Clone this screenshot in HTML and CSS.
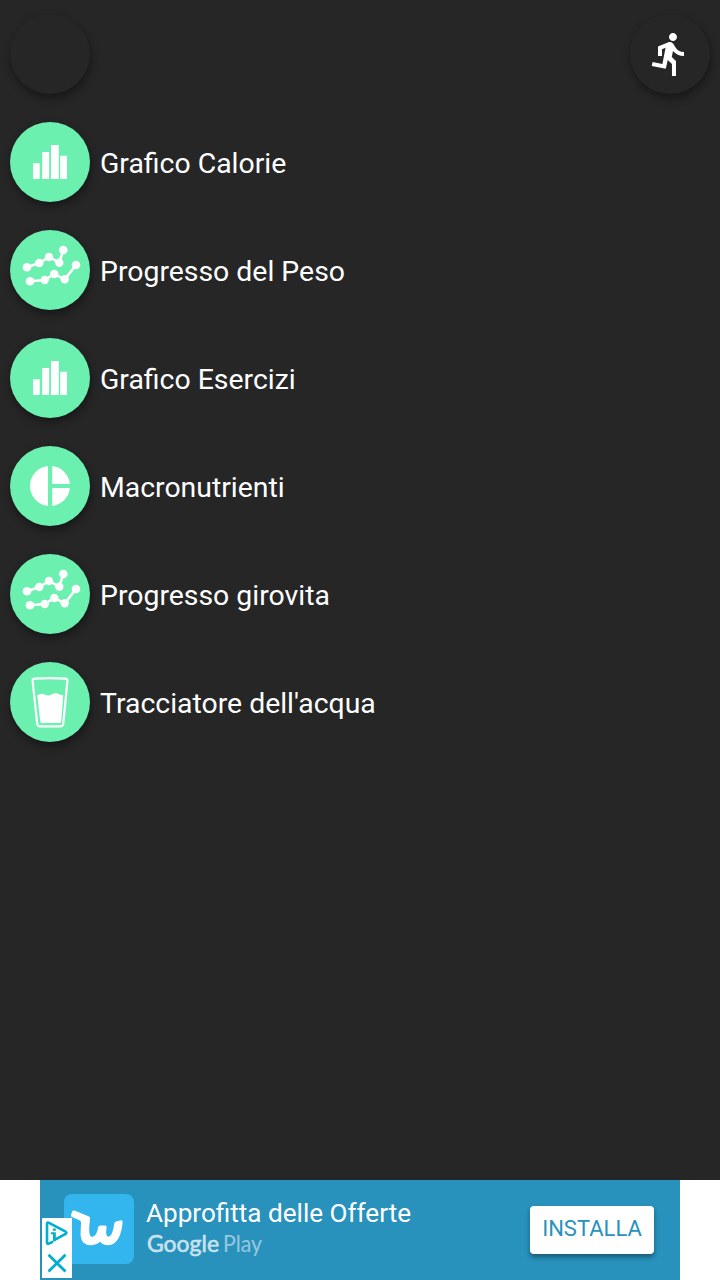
FILE: index.html
```html
<!DOCTYPE html>
<html lang="it">
<head>
<meta charset="utf-8">
<title>Grafici</title>
<link rel="stylesheet" href="styles.css">
</head>
<body>
<svg width="0" height="0" class="defs">
  <symbol id="bars" viewBox="0 0 80 80"><path d="M23 41.3h6.7V57H23zM32.2 30h7v27h-7zM41 23h7.8v34H41zM50.3 33.7H57V57h-6.7z"/></symbol>
  <symbol id="lines" viewBox="0 0 80 80">
    <path d="M17 37.3 29.3 33 39 27l10.3 5.7L53.3 20M20 51.3 34.7 50l9.6-6 10.4 5.3L66 35" fill="none" stroke="#fff" stroke-width="2.5"/>
    <circle cx="17" cy="37.3" r="4.3"/><circle cx="29.3" cy="33" r="4.2"/><circle cx="39" cy="27" r="4.2"/><circle cx="49.3" cy="32.7" r="4.2"/><circle cx="53.3" cy="20" r="4.3"/>
    <circle cx="20" cy="51.3" r="4.3"/><circle cx="34.7" cy="50" r="4.2"/><circle cx="44.3" cy="44" r="4.2"/><circle cx="54.7" cy="49.3" r="4.2"/><circle cx="66" cy="35" r="4.3"/>
  </symbol>
  <symbol id="pie" viewBox="0 0 80 80"><path d="M38 20.1a20 20 0 0 0 0 39.8zM42.2 20.1V38h17.7A20 20 0 0 0 42.2 20.1zM42.2 42v17.9A20 20 0 0 0 59.9 42z"/></symbol>
  <symbol id="glass" viewBox="0 0 80 80">
    <path d="M24.8 16.6Q40 15.6 55.2 16.6Q57.6 16.8 57.4 19L53.3 61.5Q53 64.4 50.5 64.4H30Q27.5 64.4 27.2 61.5L22.6 19Q22.4 16.8 24.8 16.6z" fill="none" stroke="#fff" stroke-width="2.2"/>
    <path d="M27.3 33.2Q30 31.3 33 31.8Q37 34.6 40.5 33Q45 29.8 49 32.3Q51 33.3 53.2 32.8L51.3 59Q51.2 61 49.5 61H32Q30.4 61 30.2 59z"/>
  </symbol>
</svg>
<main class="screen">
  <header class="topbar">
    <div class="fab dark"></div>
    <div class="fab dark"><svg class="run" viewBox="0 0 24 24"><path d="M13.49 5.48c1.1 0 2-.9 2-2s-.9-2-2-2-2 .9-2 2 .9 2 2 2zm-3.6 13.9l1-4.4 2.1 2v6h2v-7.5l-2.1-2 .6-3c1.3 1.5 3.3 2.5 5.5 2.5v-2c-1.9 0-3.5-1-4.3-2.4l-1-1.6c-.4-.6-1-1-1.7-1-.3 0-.5.1-.8.1l-5.2 2.2v4.7h2v-3.4l1.8-.7-1.6 8.1-4.9-1-.4 2 7 1.4z"/></svg></div>
  </header>
  <nav class="menu">
    <div class="item"><div class="fab"><svg><use href="#bars"/></svg></div><span class="label">Grafico Calorie</span></div>
    <div class="item"><div class="fab"><svg><use href="#lines"/></svg></div><span class="label">Progresso del Peso</span></div>
    <div class="item"><div class="fab"><svg><use href="#bars"/></svg></div><span class="label">Grafico Esercizi</span></div>
    <div class="item"><div class="fab"><svg><use href="#pie"/></svg></div><span class="label">Macronutrienti</span></div>
    <div class="item"><div class="fab"><svg><use href="#lines"/></svg></div><span class="label">Progresso girovita</span></div>
    <div class="item"><div class="fab"><svg><use href="#glass"/></svg></div><span class="label">Tracciatore dell'acqua</span></div>
  </nav>
</main>
<footer class="ad-strip">
  <div class="ad">
    <svg class="app-logo" viewBox="0 0 70 70"><path d="M8.3 17Q9 16 10.5 16.6L25 22.5Q26.5 23.3 26 25L25.2 34Q25 42.7 28 42.7C31.5 42.7 33.5 38 34 33.5Q34.3 31.5 36.5 31.5H41Q42.8 31.5 42.6 33.5Q41.2 42.7 44.3 42.7C48 42.7 49.5 35 50.2 29.5Q50.5 27.8 52 27.4L57 26.2Q58.8 26 58.6 28C57.8 41 53 51.2 44 51.2Q38.5 51.2 36.3 47.8Q32 51.2 26.5 51.2C18.5 51.2 16.2 45 16.6 38L17 28.5Q17 27 15.5 26.3L8 23Q6.6 22.3 7 21z"/></svg>
    <div class="ad-text">
      <div class="ad-title">Approfitta delle Offerte</div>
      <svg class="play" viewBox="0 0 120 36"><text class="google" x="1" y="22.7" textLength="72" lengthAdjust="spacingAndGlyphs">Google</text><text class="store" x="77" y="22.7" textLength="39" lengthAdjust="spacingAndGlyphs">Play</text></svg>
    </div>
    <div class="install">INSTALLA</div>
    <div class="choices"><svg viewBox="0 0 30 60"><path d="M10.2 24 7 25.6Q5 26.3 5 24.2V6Q5 3.9 7 4.9L23.6 13.7Q25.2 14.8 23.6 15.8L13.5 21.4" fill="none" stroke="#00aecd" stroke-width="2.6" stroke-linecap="round"/><path d="M11 10.4h2.8v2.3H11zM9 14.3h4.8v5.4h2v2H13.8v1.6H11v-7H9z" fill="#00aecd"/><path d="M6.5 36.8 23.5 53.5M23.5 36.8 6.5 53.5" stroke="#00aecd" stroke-width="2.8"/></svg></div>
  </div>
</footer>
</body>
</html>
```
FILE: styles.css
```css
* { box-sizing: border-box; }
body { margin: 0; width: 720px; height: 1280px; display: flex; flex-direction: column; overflow: hidden; background: #fff; font-family: Roboto, sans-serif; }
.defs { position: absolute; }
.screen { height: 1180px; background: #262626; padding: 14px 10px; }
.topbar { display: flex; justify-content: space-between; margin-bottom: 28px; }
.menu { display: flex; flex-direction: column; gap: 28px; }
.item { display: flex; align-items: center; gap: 10px; }
.fab { width: 80px; height: 80px; border-radius: 50%; background: #6cf0b0; box-shadow: 1px 4px 8px rgba(0, 0, 0, .42); display: flex; align-items: center; justify-content: center; }
.fab svg { display: block; width: 80px; height: 80px; fill: #fff; }
.fab.dark { background: #262626; }
.fab .run { width: 48px; height: 48px; }
.label { color: #fff; font-size: 28.4px; line-height: 34px; white-space: nowrap; padding-top: 3px; }
.ad-strip { height: 100px; display: flex; justify-content: center; }
.ad { position: relative; width: 640px; height: 100px; background: #2892bd; display: flex; align-items: flex-start; padding: 14px 26px 0 24px; }
.app-logo { width: 70px; height: 70px; border-radius: 8px; background: #33b5ee; fill: #fff; }
.ad-text { margin-left: 12px; padding-top: 3px; }
.ad-title { color: #fff; font-size: 26.1px; line-height: 32px; white-space: nowrap; }
.play { display: block; width: 120px; height: 36px; overflow: visible; fill: #fff; font-family: Lato, sans-serif; font-size: 24px; line-height: 1; }
.google { font-weight: 400; opacity: .75; stroke: #fff; stroke-width: .6px; }
.store { opacity: .5; }
.install { margin: 12px 0 0 auto; width: 124px; height: 48px; border-radius: 4px; background: #fff; color: #2892bd; font-size: 22px; line-height: 46px; text-align: center; box-shadow: 0 3px 5px rgba(0, 0, 0, .4); }
.choices { position: absolute; left: 2px; top: 38px; width: 30px; height: 60px; background: #fff; }
.choices svg { display: block; width: 30px; height: 60px; }
```
